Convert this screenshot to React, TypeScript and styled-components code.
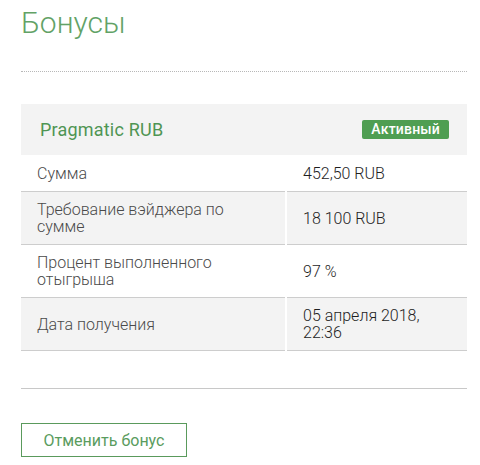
import React from "react";
import styled, { createGlobalStyle } from "styled-components";

const Global = createGlobalStyle`
  html, body { margin: 0; padding: 0; background: #fff; }
  body { font-family: Roboto, "Liberation Sans", Arial, sans-serif; }
  * { box-sizing: border-box; }
`;

const Page = styled.div`
  width: 480px;
  padding: 5px 13px 0 21px;
`;

const Title = styled.h1`
  margin: 0;
  font-size: 30px;
  line-height: 36px;
  font-weight: 300;
  color: #62a266;
`;

const Dotted = styled.div`
  margin-top: 30px;
  border-top: 1px dotted #b8b8b8;
`;

const Card = styled.section`
  margin-top: 32px;
`;

const CardHeader = styled.div`
  height: 51px;
  background: #f3f3f3;
  display: flex;
  align-items: center;
  justify-content: space-between;
  padding: 0 18px 0 19px;
`;

const CardTitle = styled.div`
  font-size: 18px;
  font-weight: 400;
  color: #4f9553;
  letter-spacing: 0.2px;
`;

const Badge = styled.span`
  display: inline-block;
  height: 19px;
  line-height: 19px;
  padding: 0 9px;
  border-radius: 2px;
  background: #4f9e52;
  color: #fff;
  font-size: 14px;
  font-weight: 500;
  letter-spacing: 0.2px;
`;

const Grid = styled.div`
  display: grid;
  grid-template-columns: 264px 1fr;
  column-gap: 2px;
`;

const Cell = styled.div<{ $shade: boolean; $value?: boolean }>`
  background: ${(p) => (p.$shade ? "#f3f3f3" : "#fff")};
  border-bottom: 1px solid #cdcdcd;
  padding: 9px 16px;
  min-height: 37px;
  display: flex;
  align-items: center;
  font-size: 16px;
  line-height: 17px;
  font-weight: 300;
  color: ${(p) => (p.$value ? "#1e1e1e" : "#4a4a4a")};
`;

const Rule = styled.div`
  margin-top: 37px;
  border-top: 1px solid #c8c8c8;
`;

const CancelButton = styled.button`
  margin-top: 34px;
  width: 166px;
  height: 34px;
  background: #fff;
  border: 1px solid #5a9a5c;
  color: #5a9c5e;
  font-family: Roboto, "Liberation Sans", Arial, sans-serif;
  font-size: 16px;
  font-weight: 400;
  padding: 0;
  cursor: pointer;
`;

const rows: [string, React.ReactNode][] = [
  ["Сумма", "452,50 RUB"],
  ["Требование вэйджера по сумме", "18 100 RUB"],
  ["Процент выполненного отыгрыша", "97 %"],
  ["Дата получения", <>05 апреля 2018,<br />22:36</>],
];

export default function App() {
  return (
    <Page>
      <Global />
      <Title>Бонусы</Title>
      <Dotted />
      <Card>
        <CardHeader>
          <CardTitle>Pragmatic RUB</CardTitle>
          <Badge>Активный</Badge>
        </CardHeader>
        <Grid>
          {rows.map(([label, value], i) => (
            <React.Fragment key={i}>
              <Cell $shade={i % 2 === 1}>
                <span style={{ maxWidth: i === 1 ? 190 : undefined }}>{label}</span>
              </Cell>
              <Cell $shade={i % 2 === 1} $value>
                <span>{value}</span>
              </Cell>
            </React.Fragment>
          ))}
        </Grid>
      </Card>
      <Rule />
      <CancelButton>Отменить бонус</CancelButton>
    </Page>
  );
}
